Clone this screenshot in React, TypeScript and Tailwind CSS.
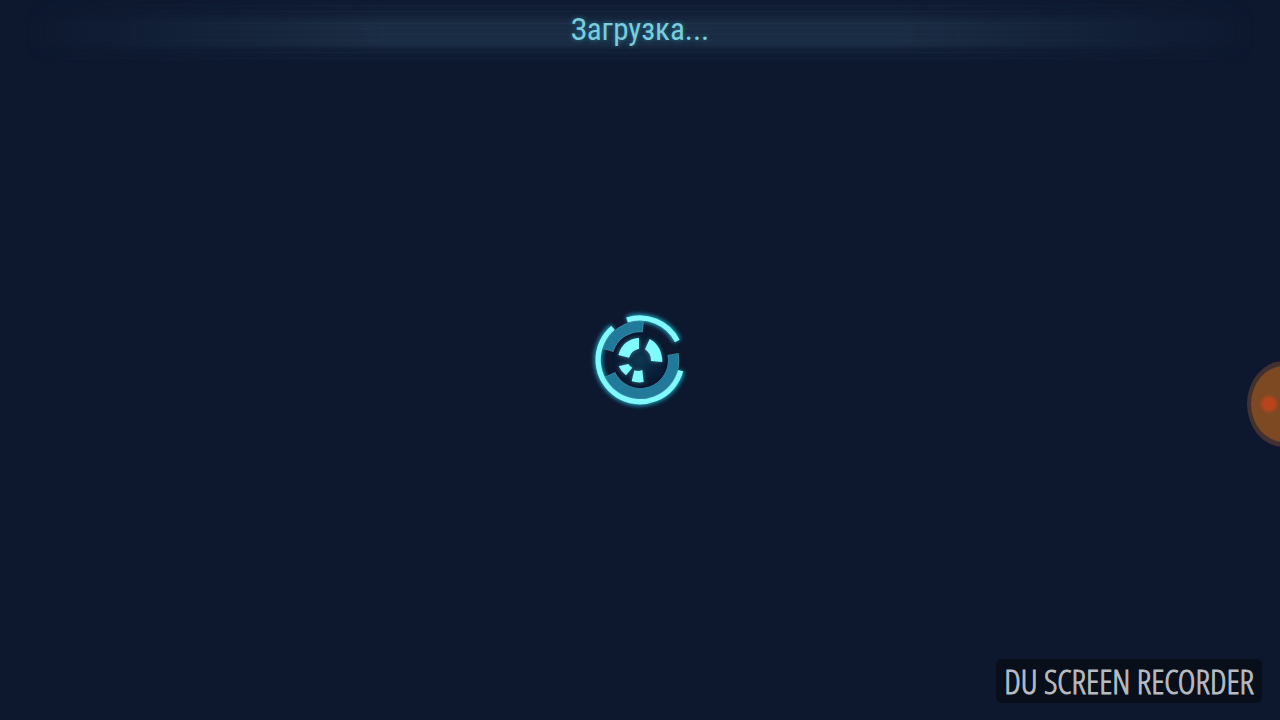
function Spinner() {
  return (
    <svg viewBox="0 0 330 330" className="size-[110px] overflow-visible" role="img" aria-label="Загрузка">
      <defs>
        <filter id="glow" x="-20%" y="-20%" width="140%" height="140%">
          <feGaussianBlur stdDeviation="7" />
        </filter>
        <radialGradient id="core">
          <stop offset="0" stopColor="#0d3850" />
          <stop offset="0.5" stopColor="#0b2440" />
          <stop offset="1" stopColor="#08162e" />
        </radialGradient>
      </defs>
      <circle cx="165" cy="165" r="84" fill="url(#core)" />
      <g fill="none">
        <g stroke="#24b9d4" strokeWidth="24" opacity="0.85" filter="url(#glow)">
          <path d="M126 45A126 126 0 0 1 277 108" />
          <path d="M84 68A126 126 0 1 0 287 197" />
        </g>
        <g stroke="#4389a4" strokeWidth="34">
          <path d="M175 65A100 100 0 0 0 69 136" />
          <path d="M264 147A100 100 0 0 1 75 208" />
        </g>
        <g stroke="#217a9a" strokeWidth="30">
          <path d="M173 65A100 100 0 0 0 70 134" />
          <path d="M264 149A100 100 0 0 1 76 210" />
        </g>
        <g stroke="#80fafc" strokeWidth="16">
          <path d="M126 45A126 126 0 0 1 277 108" />
          <path d="M84 68A126 126 0 1 0 287 197" />
        </g>
      </g>
      <g id="petals" fill="#80fafc">
        <path d="M162 98V131Q139 136 132 158L100 150Q112 104 162 98Z" />
        <path d="M194 102Q231 122 232 171L198 168Q199 145 180 133Z" />
        <path d="M101 184L130 177Q134 184 142 188L123 211Q109 201 101 184Z" />
        <path d="M148 196Q160 200 172 195L176 231Q158 234 140 229Z" />
      </g>
      <use href="#petals" opacity="0.45" filter="url(#glow)" />
    </svg>
  );
}

function HeaderGlow() {
  const lines = [5, 11, 23, 28, 34, 40, 52, 58];
  return (
    <svg className="absolute inset-0 size-full" viewBox="0 0 1280 64" preserveAspectRatio="none" aria-hidden="true">
      <defs>
        <linearGradient id="band" x2="0" y2="1">
          <stop offset="0" stopColor="#1b2d44" stopOpacity="0.1" />
          <stop offset="0.2" stopColor="#1b2d44" stopOpacity="0.3" />
          <stop offset="0.36" stopColor="#1b2d44" stopOpacity="0.95" />
          <stop offset="0.7" stopColor="#1b2d44" stopOpacity="0.95" />
          <stop offset="0.78" stopColor="#1b2d44" stopOpacity="0.3" />
          <stop offset="1" stopColor="#1b2d44" stopOpacity="0" />
        </linearGradient>
        <linearGradient id="fade">
          <stop offset="0.02" stopColor="#fff" stopOpacity="0" />
          <stop offset="0.3" stopColor="#fff" />
          <stop offset="0.7" stopColor="#fff" />
          <stop offset="0.98" stopColor="#fff" stopOpacity="0" />
        </linearGradient>
        <mask id="edges" maskUnits="userSpaceOnUse" x="0" y="0" width="1280" height="64">
          <rect width="1280" height="64" fill="url(#fade)" />
        </mask>
      </defs>
      <g mask="url(#edges)">
        <rect width="1280" height="64" fill="url(#band)" />
        {lines.map((y) => (
          <rect key={y} y={y} width="1280" height="1" fill="#2a5064" opacity="0.15" />
        ))}
      </g>
    </svg>
  );
}

export default function App() {
  return (
    <div className="relative flex min-h-screen flex-col overflow-hidden bg-[#0d182f]">
      <header className="relative flex h-16 justify-center">
        <HeaderGlow />
        <h1 className="relative pt-2.5 font-['Roboto_Condensed','Noto_Sans',sans-serif] text-[31px] leading-10 text-[#7accdc] [text-shadow:0_0_5px_#23718f]">
          Загрузка...
        </h1>
      </header>
      <main className="flex flex-1 items-center justify-center pb-16">
        <Spinner />
      </main>
      <button type="button" aria-label="Запись экрана" className="absolute top-[361px] -right-[52px] size-[86px]">
        <svg viewBox="0 0 86 86" className="size-full" aria-hidden="true">
          <defs>
            <radialGradient id="dot">
              <stop offset="0.55" stopColor="#b9431a" />
              <stop offset="1" stopColor="#b9431a" stopOpacity="0" />
            </radialGradient>
          </defs>
          <ellipse cx="38" cy="43" rx="37" ry="43" fill="#43302f" />
          <ellipse cx="38" cy="43" rx="33" ry="38" fill="#7c4923" />
          <circle cx="23" cy="43" r="10" fill="url(#dot)" />
        </svg>
      </button>
      <div className="absolute right-[18px] bottom-[17px] rounded-md bg-[#080f1b] px-2 py-0.5 font-['Open_Sans_Condensed_Light','Roboto_Condensed','Noto_Sans',sans-serif] text-[34px] leading-10 whitespace-nowrap text-[#b8bbc1] [-webkit-text-stroke:1px_#b8bbc1]">
        DU SCREEN RECORDER
      </div>
    </div>
  );
}
